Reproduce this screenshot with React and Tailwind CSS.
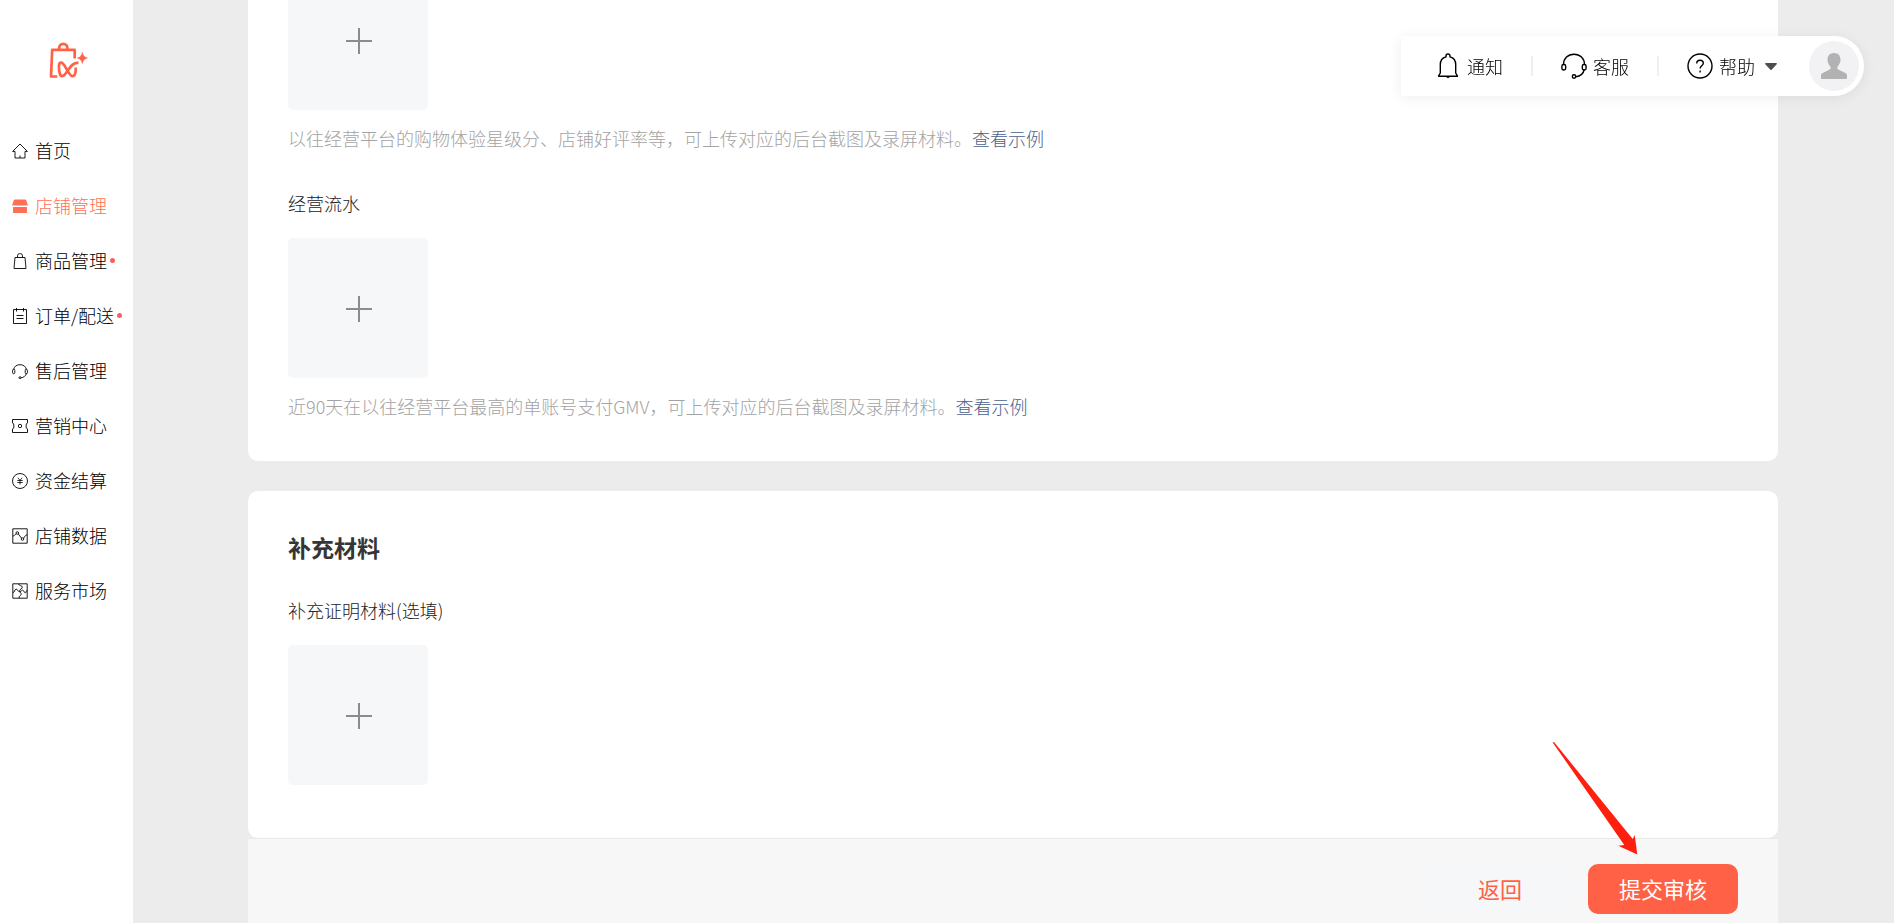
import { useState } from 'react'

const ICONS = {
  home: (
    <>
      <path d="M.6 8.4 8 1l7.400 7.400H13V15H3V8.400Z" />
      <path d="M8 12.500V15" />
    </>
  ),
  shop: (
    <g fill="currentColor" stroke="none">
      <path d="M2.800 1.500h10.400a1 1 0 0 1 .9.6L16 7.500H0l1.900-5.400a1 1 0 0 1 .9-.6Z" />
      <path d="M1 9h14v5.500a.6.6 0 0 1-.6.6H1.600a.6.6 0 0 1-.6-.6Z" />
    </g>
  ),
  goods: (
    <>
      <path d="M3 4.500h10l1 11H2Z" />
      <path d="M5.500 4.500V2.800A2.200 2.200 0 0 1 7.700.6h.6a2.200 2.200 0 0 1 2.200 2.200v1.700" />
    </>
  ),
  order: (
    <>
      <path d="M1.500 1.500h13v14h-13ZM4.500 0v3.500M11.500 0v3.500M4.500 7.500h7M4.500 10.500h7" />
    </>
  ),
  service: (
    <>
      <path d="M1.500 6.500a6.800 6.800 0 0 1 13 0M14.500 10.500c-.8 2.400-2.800 4-5.500 4.300" />
      <rect x=".6" y="6.300" width="2.200" height="4.400" rx="1.100" />
      <rect x="13.200" y="6.300" width="2.200" height="4.400" rx="1.100" />
      <circle cx="8" cy="14.700" r="1" />
    </>
  ),
  market: (
    <>
      <path d="M.5 1.500h15v3.600l-1.300.8v4.200l1.300.8v3.600H.5v-3.600l1.300-.8V5.900L.5 5.100Z" />
      <circle cx="8" cy="8" r="1.700" />
    </>
  ),
  money: (
    <>
      <circle cx="8" cy="8" r="7.500" />
      <path d="M5.800 4.800 8 7.300l2.200-2.500M8 7.300v4.200M5.300 7.500h5.400M5.300 9.500h5.400" strokeWidth=".8" />
    </>
  ),
  data: (
    <>
      <path d="M.8.800h14.400v14.400H.8Z" />
      <path d="M.8 8c1.800 0 2-1.200 3.400-2.300M6.300 6c1.300 1.200 1.800 2.800 3.200 4.100M11.500 10.200C12.800 9 13 7 15.200 6.800" />
      <circle cx="5.300" cy="5" r="1.300" />
      <circle cx="10.500" cy="11" r="1.300" />
    </>
  ),
  mall: (
    <>
      <path d="M.8.800h14.400v14.400H.8Z" />
      <path d="M6.500 1c.2 1.800 3.800 1.200 3.800 3.200 0 1.800-2.600 1.600-2.600 3.600s2.100 1.900 1.300 3.900c-.5 1.300-2.300 1.300-1.900 3.500" />
      <path d="M1 9.500c1.800.2 1.300-3.300 3.200-3.300 1.700 0 1.500 2.600 3.500 2.600 1.700 0 1.800-1.900 3-1.600 1.700.4 1.500 3 2.800 2.600.9-.3.600-2.400 1.700-2.600" />
    </>
  ),
}

const NAV = [
  { id: 'home', label: '首页' },
  { id: 'shop', label: '店铺管理' },
  { id: 'goods', label: '商品管理', dot: true },
  { id: 'order', label: '订单/配送', dot: true },
  { id: 'service', label: '售后管理' },
  { id: 'market', label: '营销中心' },
  { id: 'money', label: '资金结算' },
  { id: 'data', label: '店铺数据' },
  { id: 'mall', label: '服务市场' },
]

function Logo() {
  return (
    <svg viewBox="0 0 39 38" className="w-[39px] h-[38px] ml-[49px]" fill="none" stroke="#ff6146" strokeWidth="2.700" strokeLinejoin="round">
      <path d="M8.300 35.500H2L3.200 8.800h22.500v8.700" />
      <path d="M10.200 8.500V6.900a4.100 4.100 0 0 1 8.200 0v1.600" />
      <path d="M29.500 21.600c-6 .2-8.200 4.400-10.800 8.100-2 2.800-3.800 5.500-5.500 5.500-2.200 0-3.300-4.800-3.300-9.500 0-2.400.9-4 2.300-4 2.300 0 4 4.400 6.300 8 1.800 2.800 3.300 5.500 5 5.500 2.400 0 3.300-3.900 3.300-8.800" />
      <path d="M33.300 11.500c.9 3.400 1.700 4.400 5 5.500-3.300 1.100-4.100 2.100-5 5.500-.9-3.400-1.700-4.400-4.800-5.500 3.100-1.100 3.900-2.100 4.800-5.500Z" fill="#ff6146" strokeWidth=".6" />
    </svg>
  )
}

function Sidebar() {
  const [active, setActive] = useState('shop')

  return (
    <aside className="w-[133px] shrink-0 bg-white pt-[41px]">
      <Logo />
      <nav className="mt-11 flex flex-col">
        {NAV.map((item) => (
          <a
            key={item.id}
            href={`#${item.id}`}
            onClick={() => setActive(item.id)}
            className={`flex items-center h-[55px] pl-3 whitespace-nowrap ${
              active === item.id ? 'text-[#ff6f56]' : 'text-black'
            }`}
          >
            <svg viewBox="0 0 16 16" className="w-4 h-4 mr-[7px] shrink-0" fill="none" stroke="currentColor" strokeWidth=".9">
              {ICONS[item.id]}
            </svg>
            <span className="pb-[2px]">{item.label}</span>
            {item.dot && <span className="ml-[3px] w-[5px] h-[5px] rounded-full bg-[#fa5f5f]" />}
          </a>
        ))}
      </nav>
    </aside>
  )
}

function TopBar() {
  return (
    <header className="fixed top-9 right-[30px] h-[60px] flex items-center gap-7 pl-[34px] pr-[5px] bg-white rounded-l-[10px] rounded-r-full shadow-[0_2px_14px_rgba(0,20,40,0.07)] text-black">
      <button className="flex items-center gap-[6px]">
        <svg viewBox="0 0 26 26" className="w-[26px] h-[26px]" fill="none" stroke="currentColor" strokeWidth="1.400" strokeLinejoin="round">
          <path d="M3.500 23.200h19L20.700 20V11.500c0-4-2.200-6.700-5.700-7.600V3a2 2 0 0 0-4 0v.9c-3.500.9-5.700 3.600-5.700 7.600V20Z" />
          <path d="M11.700 24.200h2.600" />
        </svg>
        通知
      </button>
      <span className="w-[2px] h-5 bg-[#f0f0f0]" />
      <button className="flex items-center gap-[6px]">
        <svg viewBox="0 0 26 26" className="w-[26px] h-[26px]" fill="none" stroke="currentColor" strokeWidth="1.400">
          <path d="M2.500 11.500C2.500 5.500 7 1.200 13 1.200s10.500 4.300 10.500 10.300M23.200 16.500c-.8 4-4 6.800-8.500 7.200" />
          <rect x=".9" y="11.500" width="3.800" height="5.500" rx="1.700" />
          <rect x="21.300" y="11.500" width="3.800" height="5.500" rx="1.700" />
          <circle cx="13" cy="23.500" r="1.700" />
        </svg>
        客服
      </button>
      <span className="w-[2px] h-5 bg-[#f0f0f0]" />
      <button className="flex items-center gap-[6px]">
        <svg viewBox="0 0 26 26" className="w-[26px] h-[26px]" fill="none" stroke="currentColor" strokeWidth="1.400">
          <circle cx="13" cy="13" r="12" />
          <path d="M9.700 10.500c0-2 1.400-3.300 3.300-3.300s3.300 1.200 3.300 3c0 2.500-3.200 2.700-3.200 5.300M13.100 17.500v2" />
        </svg>
        帮助
        <svg viewBox="0 0 12 7" className="w-3 h-[7px] ml-1 text-[#4d4d4d]" fill="currentColor">
          <path d="M.8 0h10.400c.7 0 1 .7.5 1.200L6.600 6.700a.8.8 0 0 1-1.200 0L.3 1.200C-.2.7.1 0 .8 0Z" />
        </svg>
      </button>
      <button aria-label="账号" className="ml-1 w-[50px] h-[50px] rounded-full bg-[#f2f2f4] flex items-center justify-center">
        <svg viewBox="0 0 26 26" className="w-[26px] h-[26px]" fill="#b2b2b2">
          <path d="M13 0c4 0 6.500 2.800 6.500 6.600 0 2.800-1.200 5.300-2.600 6.600-.9.900-.8 2.600.4 3.200l7 3.600c1.100.6 1.700 1.500 1.700 2.700V25a1 1 0 0 1-1 1H1a1 1 0 0 1-1-1v-2.300C0 21.500.6 20.600 1.700 20l7-3.600c1.200-.6 1.300-2.300.4-3.200-1.400-1.300-2.600-3.800-2.600-6.600C6.500 2.800 9 0 13 0Z" />
        </svg>
      </button>
    </header>
  )
}

function UploadTile({ label }) {
  return (
    <button aria-label={label} className="w-[140px] h-[140px] shrink-0 rounded-[5px] bg-[#f6f7f9] flex items-center justify-center">
      <svg viewBox="0 0 28 28" className="w-7 h-7" fill="none" stroke="#8c8c8c" strokeWidth="2">
        <path d="M15 2v26M2 15h26" />
      </svg>
    </button>
  )
}

function Note({ children }) {
  return (
    <p className="mt-[14px] text-[#a3a3a3]">
      {children}
      <a href="#example" className="text-[#4a5f8c]">查看示例</a>
    </p>
  )
}

export default function App() {
  return (
    <div className="h-screen flex overflow-hidden bg-[#ececec] text-[18px] leading-7 font-light font-['Noto_Sans_CJK_SC',sans-serif]">
      <Sidebar />
      {/* form is scrolled to its end */}
      <main className="flex-1 min-w-0 pl-[115px] pr-[116px] flex flex-col justify-end">
        <section className="shrink-0 bg-white rounded-[10px] px-10 pt-10 pb-[41px] text-[#222222]">
          <UploadTile label="上传店铺评分" />
          <Note>以往经营平台的购物体验星级分、店铺好评率等，可上传对应的后台截图及录屏材料。</Note>
          <h3 className="mt-[37px] mb-[21px]">经营流水</h3>
          <UploadTile label="上传经营流水" />
          <Note>近90天在以往经营平台最高的单账号支付GMV，可上传对应的后台截图及录屏材料。</Note>
        </section>

        <section className="shrink-0 mt-[30px] bg-white rounded-[10px] px-10 pt-10 pb-[53px] text-[#222222]">
          <h2 className="text-[23px] leading-8 font-bold text-[#353535]">补充材料</h2>
          <h3 className="mt-[33px] mb-[21px]">补充证明材料(选填)</h3>
          <UploadTile label="上传补充材料" />
        </section>

        <footer className="relative shrink-0 flex justify-end gap-[13px] pt-[25px] pb-[9px] pr-10 bg-[#f7f7f7] border-t border-[#e8e8e8] text-[22px] font-normal">
          <button className="w-[150px] h-[50px] pb-[2px] rounded-[10px] bg-[#f6f7f8] text-[#ff6146]">返回</button>
          <button className="w-[150px] h-[50px] pb-[2px] rounded-[10px] bg-[#ff6146] text-white">提交审核</button>
          <svg viewBox="0 0 86 114" className="absolute right-[140px] bottom-[68px] w-[86px] h-[114px] pointer-events-none" fill="#ff1f0f">
            <path d="M.7 1.500 2 1 80.700 98l2-4 2.600 19.500-19-8.800 6-.7Z" />
          </svg>
        </footer>
      </main>
      <TopBar />
    </div>
  )
}
